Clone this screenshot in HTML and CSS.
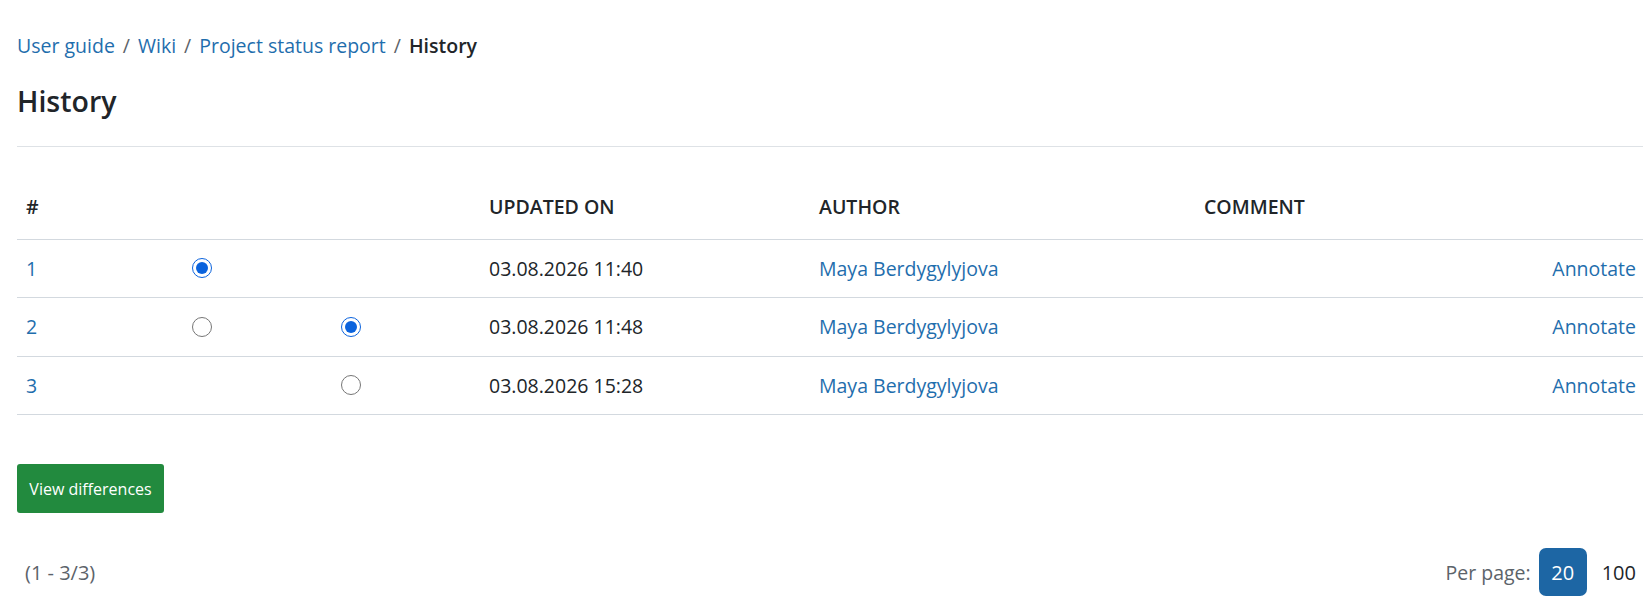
FILE: index.html
```html
<!DOCTYPE html>
<html lang="en">
<head>
<meta charset="utf-8">
<title>History</title>
<link rel="stylesheet" href="styles.css">
</head>
<body>
<div class="page">
  <nav class="breadcrumb">
    <a href="#">User guide</a><span class="sep">/</span><a href="#">Wiki</a><span class="sep">/</span><a href="#">Project status report</a><span class="sep">/</span><span class="current">History</span>
  </nav>
  <h1 class="title">History</h1>
  <div class="divider"></div>
  <form class="history-form">
    <table class="history">
      <thead>
        <tr>
          <th class="c-num">#</th>
          <th class="c-r1"></th>
          <th class="c-r2"></th>
          <th class="c-date">Updated on</th>
          <th class="c-author">Author</th>
          <th class="c-comment">Comment</th>
          <th class="c-act"></th>
        </tr>
      </thead>
      <tbody>
        <tr>
          <td class="c-num"><a href="#">1</a></td>
          <td class="c-r1"><input type="radio" name="from" checked></td>
          <td class="c-r2"></td>
          <td class="c-date">03.08.2026 11:40</td>
          <td class="c-author"><a href="#">Maya Berdygylyjova</a></td>
          <td class="c-comment"></td>
          <td class="c-act"><a href="#">Annotate</a></td>
        </tr>
        <tr>
          <td class="c-num"><a href="#">2</a></td>
          <td class="c-r1"><input type="radio" name="from"></td>
          <td class="c-r2"><input type="radio" name="to" checked></td>
          <td class="c-date">03.08.2026 11:48</td>
          <td class="c-author"><a href="#">Maya Berdygylyjova</a></td>
          <td class="c-comment"></td>
          <td class="c-act"><a href="#">Annotate</a></td>
        </tr>
        <tr>
          <td class="c-num"><a href="#">3</a></td>
          <td class="c-r1"></td>
          <td class="c-r2"><input type="radio" name="to"></td>
          <td class="c-date">03.08.2026 15:28</td>
          <td class="c-author"><a href="#">Maya Berdygylyjova</a></td>
          <td class="c-comment"></td>
          <td class="c-act"><a href="#">Annotate</a></td>
        </tr>
      </tbody>
    </table>
    <button type="button" class="btn-diff">View differences</button>
  </form>
  <div class="pager">
    <span class="count">(1 - 3/3)</span>
    <div class="per-page">
      <span class="label">Per page:</span>
      <span class="opt active">20</span>
      <span class="opt">100</span>
    </div>
  </div>
</div>
</body>
</html>
```
FILE: styles.css
```css
* { box-sizing: border-box; }
html, body { margin: 0; padding: 0; background: #fff; }
body {
  font-family: "Open Sans", "Noto Sans", sans-serif;
  color: #212529;
  font-size: 19.5px;
}
a { color: #1f6ead; text-decoration: none; }
.page {
  width: 1643px;
  padding: 32px 0 0 17px;
}
.breadcrumb {
  font-size: 19.5px;
  line-height: 28px;
  height: 28px;
}
.breadcrumb .sep { color: #5c636a; margin: 0 8px; }
.breadcrumb .current { font-weight: 600; color: #212529; }
.title {
  margin: 22px 0 0;
  font-size: 28.5px;
  font-weight: 600;
  line-height: 38px;
}
.divider {
  margin-top: 26px;
  height: 1px;
  background: #dee2e6;
}
.history {
  margin-top: 24px;
  width: 100%;
  border-collapse: collapse;
  table-layout: fixed;
  font-size: 19.5px;
}
.history th {
  text-align: left;
  font-weight: 600;
  font-size: 19.5px;
  text-transform: uppercase;
  height: 68px;
  padding: 4px 9px 0;
  vertical-align: middle;
  border-bottom: 1px solid #d3d9df;
}
.history td {
  height: 58.5px;
  padding: 0 9px;
  vertical-align: middle;
  border-bottom: 1px solid #d3d9df;
}
.c-num { width: 150px; }
.c-r1 { width: 149px; }
.c-r2 { width: 164px; }
.history td.c-r1, .history td.c-r2 { padding-left: 25px; }
.c-date { width: 330px; }
.c-author { width: 385px; }
.c-act { width: 140px; }
.history .c-act { text-align: right; padding-right: 7px; }
.history input[type=radio] {
  width: 20px;
  height: 20px;
  margin: 0;
  display: block;
  accent-color: #0b63dd;
}
.btn-diff {
  display: block;
  margin-top: 49px;
  width: 147px;
  height: 49px;
  background: #228a3e;
  color: #fff;
  border: 0;
  border-radius: 3px;
  font-family: inherit;
  font-size: 16px;
  padding: 0;
}
.pager {
  margin-top: 35px;
  width: 1626px;
  display: flex;
  justify-content: space-between;
  align-items: center;
}
.count { color: #5c636a; padding-left: 8px; font-size: 20px; }
.per-page { display: flex; align-items: center; }
.per-page .label { color: #5c636a; margin-right: 8px; font-size: 19.5px; }
.opt {
  display: inline-flex;
  align-items: center;
  justify-content: center;
  height: 48px;
  min-width: 48px;
  padding: 0 7px;
  font-size: 20px;
  color: #212529;
}
.opt.active {
  background: #1d66a4;
  color: #fff;
  border-radius: 7px;
  margin-right: 8px;
}
```
